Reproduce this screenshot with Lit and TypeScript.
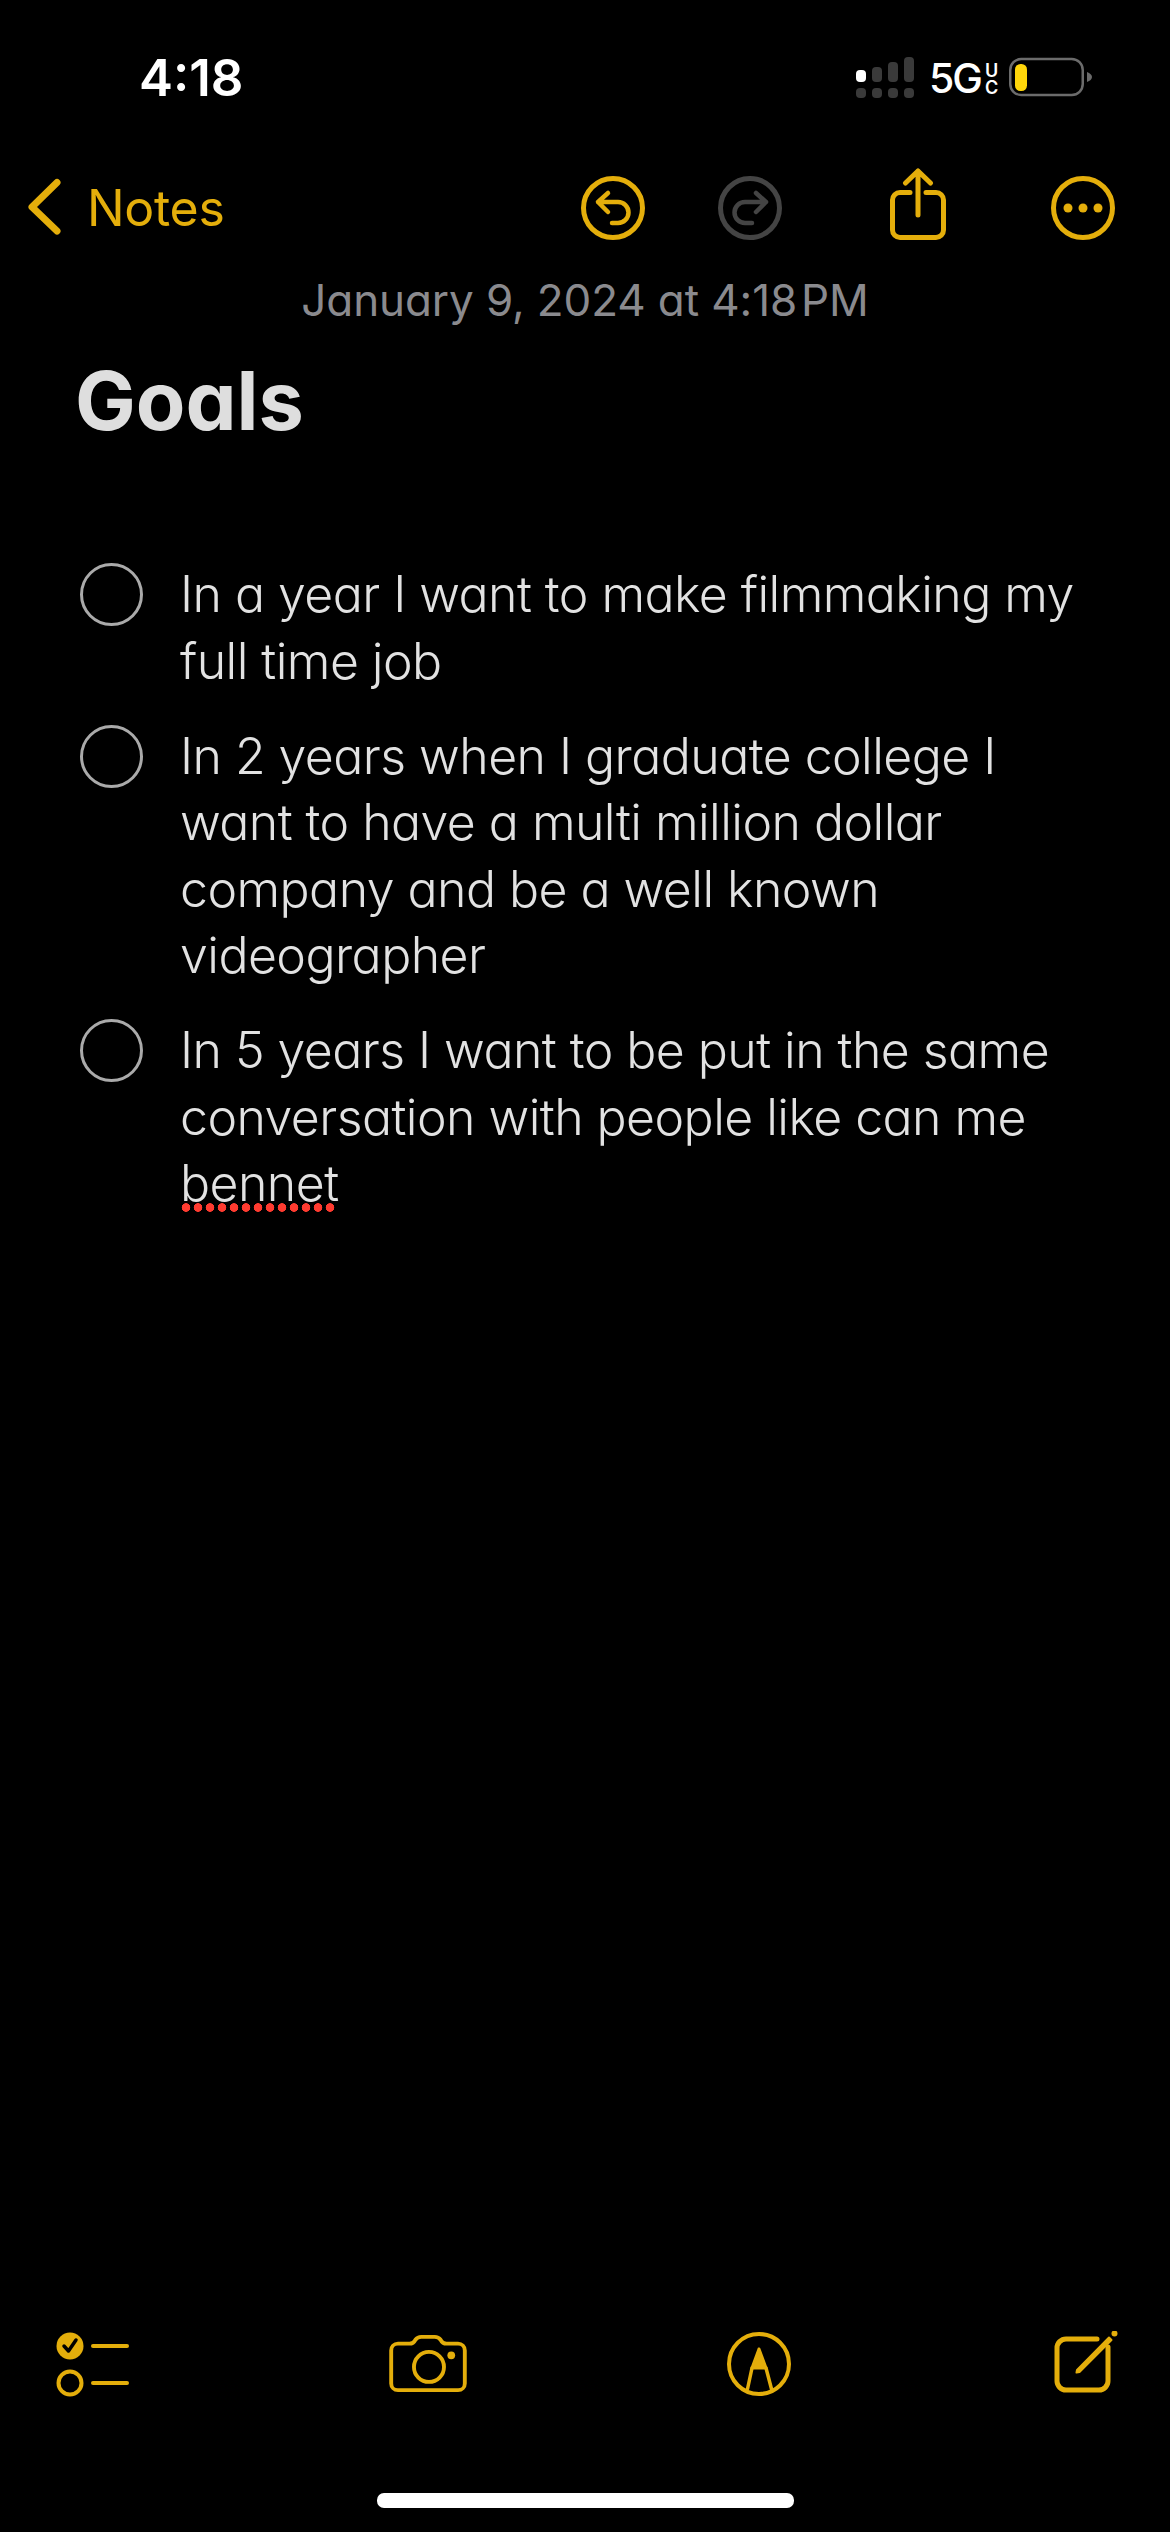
import { LitElement, html, css } from "lit";
import { customElement } from "lit/decorators.js";

const GOALS = [
  html`In a year I want to make filmmaking my full time job`,
  html`In 2 years when I graduate college I want to have a multi million dollar company and be a well known videographer`,
  html`In 5 years I want to be put in the same conversation with people like can me <span class="typo">bennet</span>`,
];

@customElement("app-root")
export class AppRoot extends LitElement {
  static styles = css`
    :host {
      display: block;
      width: 1170px;
      height: 2532px;
      background: #000;
      font-family: Inter, "Liberation Sans", sans-serif;
      font-feature-settings: "cv11";
      overflow: hidden;
    }
    .screen {
      height: 2532px;
      display: flex;
      flex-direction: column;
    }
    svg {
      display: block;
      flex: none;
      fill: none;
      stroke: #e4ae0b;
      stroke-linecap: round;
      stroke-linejoin: round;
    }

    .status {
      height: 168px;
      display: flex;
      align-items: flex-start;
      justify-content: space-between;
      padding: 0 78px 0 139px;
      box-sizing: border-box;
    }
    .time {
      margin-top: 48px;
      color: #fff;
      font-size: 51px;
      line-height: 60px;
      font-weight: 600;
    }
    .signal-group {
      margin-top: 57px;
      display: flex;
      align-items: flex-start;
    }
    .signal {
      stroke: none;
    }
    .network {
      margin-left: 15px;
      width: 80px;
      display: flex;
      color: #fff;
      height: 41px;
    }
    .fiveg {
      font-size: 41px;
      line-height: 42px;
      font-weight: 500;
      letter-spacing: -2px;
    }
    .uc {
      margin-left: 4px;
      display: flex;
      flex-direction: column;
      align-items: center;
      font-size: 18px;
      line-height: 17px;
      font-weight: 600;
      padding-top: 5px;
    }
    .battery {
      stroke: none;
    }

    .nav {
      height: 80px;
      display: flex;
      align-items: center;
    }
    .nav-label {
      color: #e4ae0b;
      font-size: 50px;
      line-height: 60px;
      letter-spacing: -0.3px;
      width: 486px;
    }
    .redo {
      stroke: #444;
      margin-left: 57px;
    }
    .share {
      margin-left: 88px;
    }
    .more {
      margin-left: 85px;
    }

    .date {
      margin-top: 24px;
      text-align: center;
      color: #8a8a8e;
      font-size: 44px;
      line-height: 56px;
      letter-spacing: -0.1px;
    }
    .title {
      margin: 23px 0 0 75px;
      color: #dedede;
      font-size: 81px;
      line-height: 100px;
      font-weight: 700;
    }

    .list {
      list-style: none;
      margin: 110px 0 0;
      padding: 0 0 0 80px;
      display: flex;
      flex-direction: column;
      gap: 28.5px;
      flex: 1;
    }
    .goal {
      display: flex;
      gap: 37px;
    }
    .goal-check {
      flex: none;
      width: 63px;
      height: 63px;
      margin-top: 2px;
      border: 3px solid #aaa;
      border-radius: 50%;
      box-sizing: border-box;
    }
    .goal-text {
      width: 915px;
      color: #e2e2e2;
      font-size: 50px;
      line-height: 66.5px;
      font-weight: 350;
      letter-spacing: -0.55px;
    }
    .typo {
      position: relative;
      display: inline-block;
    }
    .typo::after {
      content: "";
      position: absolute;
      left: 0;
      bottom: 5px;
      width: 156px;
      height: 9px;
      background: radial-gradient(circle, #ff3b30 4px, transparent 4.6px) 0 0 / 12px 9px repeat-x;
    }

    .toolbar {
      height: 80px;
      display: flex;
      align-items: center;
      justify-content: space-between;
      padding: 0 50px;
    }
    .markup {
      margin-right: 4px;
    }
    .home {
      margin: 89px auto 24px;
      width: 417px;
      height: 15px;
      border-radius: 7px;
      background: #fff;
    }
  `;

  render() {
    return html`
      <div class="screen">
        <div class="status">
          <div class="time">4:18</div>
          <div class="signal-group">
            ${this.renderSignal()}
            <div class="network">
              <span class="fiveg">5G</span>
              <span class="uc"><span>U</span><span>C</span></span>
            </div>
            ${this.renderBattery()}
          </div>
        </div>

        <div class="nav">
          <svg width="87" height="80" viewBox="0 0 87 80" stroke-width="7">
            <path d="M57 14.5 32 39 57 63" />
          </svg>
          <div class="nav-label">Notes</div>
          ${this.renderUndo()} ${this.renderRedo()} ${this.renderShare()} ${this.renderMore()}
        </div>

        <div class="date">January 9, 2024 at 4:18\u200aPM</div>
        <div class="title">Goals</div>

        <ul class="list">
          ${GOALS.map(
            (goal) => html`
              <li class="goal">
                <div class="goal-check"></div>
                <div class="goal-text">${goal}</div>
              </li>
            `
          )}
        </ul>

        <div class="toolbar">
          ${this.renderChecklist()} ${this.renderCamera()} ${this.renderMarkup()} ${this.renderCompose()}
        </div>
        <div class="home"></div>
      </div>
    `;
  }

  renderSignal() {
    return html`
      <svg class="signal" width="58" height="41" viewBox="0 0 58 41">
        <rect x="0" y="13" width="10" height="12" rx="4" fill="#fff" />
        <rect x="16" y="10" width="10" height="15" rx="4" fill="#3a3a3a" />
        <rect x="32" y="5" width="10" height="20" rx="4" fill="#3a3a3a" />
        <rect x="48" y="0" width="10" height="25" rx="4" fill="#3a3a3a" />
        <rect x="0" y="31" width="10" height="10" rx="4" fill="#3a3a3a" />
        <rect x="16" y="31" width="10" height="10" rx="4" fill="#3a3a3a" />
        <rect x="32" y="31" width="10" height="10" rx="4" fill="#3a3a3a" />
        <rect x="48" y="31" width="10" height="10" rx="4" fill="#3a3a3a" />
      </svg>
    `;
  }

  renderBattery() {
    return html`
      <svg class="battery" width="83" height="40" viewBox="0 0 83 40">
        <rect x="1.25" y="2" width="72.5" height="36" rx="11" fill="none" stroke="#6b6b6b" stroke-width="2.5" />
        <rect x="6" y="7" width="12" height="27" rx="5.5" fill="#ffd60a" />
        <path d="M78 15c3 1 5 3 5 5s-2 4-5 5z" fill="#6b6b6b" />
      </svg>
    `;
  }

  renderUndo() {
    return html`
      <svg width="80" height="80" viewBox="0 0 80 80" stroke-width="5">
        <circle cx="40" cy="40" r="29.5" />
        <path stroke-width="4.5" d="M35 25 25 34 35 44M25 34h20a10.5 10.5 0 0 1 0 21h-6" />
      </svg>
    `;
  }

  renderRedo() {
    return html`
      <svg class="redo" width="80" height="80" viewBox="0 0 80 80" stroke-width="5">
        <circle cx="40" cy="40" r="29.5" />
        <path stroke-width="4.5" d="M46 25 56 34 46 44M56 34H35a10.5 10.5 0 0 0 0 21h7" />
      </svg>
    `;
  }

  renderShare() {
    return html`
      <svg class="share" width="80" height="80" viewBox="0 0 80 80" stroke-width="5">
        <path d="M32 24.5H22a7.5 7.5 0 0 0-7.5 7.5V62a7.5 7.5 0 0 0 7.5 7.5h36a7.5 7.5 0 0 0 7.5-7.5V32a7.5 7.5 0 0 0-7.5-7.5H48" />
        <path d="M40 47V3M27.5 15 40 3 52.5 15" />
      </svg>
    `;
  }

  renderMore() {
    return html`
      <svg class="more" width="80" height="80" viewBox="0 0 80 80" stroke-width="5">
        <circle cx="40" cy="40" r="29.5" />
        <circle cx="25" cy="40" r="4.5" fill="#e4ae0b" stroke="none" />
        <circle cx="40" cy="40" r="4.5" fill="#e4ae0b" stroke="none" />
        <circle cx="55" cy="40" r="4.5" fill="#e4ae0b" stroke="none" />
      </svg>
    `;
  }

  renderChecklist() {
    return html`
      <svg width="80" height="77" viewBox="0 0 80 77">
        <circle cx="20" cy="20" r="13.5" fill="#e4ae0b" stroke="none" />
        <path d="M14 20l4.5 5 7.5-11" stroke="#000" stroke-width="3.5" />
        <path d="M43 20h34" stroke-width="4" />
        <circle cx="20" cy="57" r="11.5" stroke-width="4" />
        <path d="M43 57h34" stroke-width="4" />
      </svg>
    `;
  }

  renderCamera() {
    return html`
      <svg width="78" height="62" viewBox="0 0 80 64" stroke-width="4">
        <path d="M9 11h12c3 0 5-2 6-4 1.5-2 3-3 6-3h14c3 0 4.5 1 6 3 1 2 3 4 6 4h12c4 0 7 3 7 7v34c0 4-3 7-7 7H9c-4 0-7-3-7-7V18c0-4 3-7 7-7z" />
        <circle cx="41" cy="35" r="15.5" />
        <circle cx="64" cy="23" r="4" fill="#e4ae0b" stroke="none" />
      </svg>
    `;
  }

  renderMarkup() {
    return html`
      <svg class="markup" width="64" height="64" viewBox="0 0 64 64" stroke-width="4">
        <circle cx="32" cy="32" r="30" />
        <path d="M32 17 25 36h14z" fill="#e4ae0b" stroke-width="3" />
        <path d="M25 36 20.5 57M39 36 44.5 57" stroke-width="3.5" />
      </svg>
    `;
  }

  renderCompose() {
    return html`
      <svg width="66" height="66" viewBox="0 0 66 66" stroke-width="5">
        <path d="M43 8H12a9 9 0 0 0-9 9v33a9 9 0 0 0 9 9h33a9 9 0 0 0 9-9V16" />
        <path d="M23 39 55 6.5 57.5 9 25.5 41 22.5 41.5z" fill="#e4ae0b" stroke-width="2" />
        <circle cx="60.5" cy="2.5" r="3" fill="#e4ae0b" stroke="none" />
      </svg>
    `;
  }
}
